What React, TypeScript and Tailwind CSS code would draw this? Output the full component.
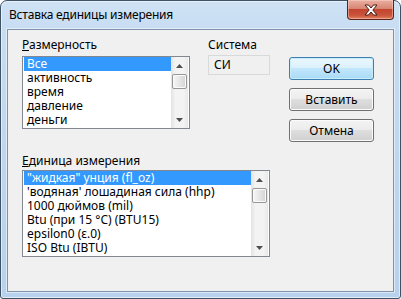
import React from "react";

const dims = ["Все", "активность", "время", "давление", "деньги"];
const units = [
  "\"жидкая\" унция (fl_oz)",
  "'водяная' лошадиная сила (hhp)",
  "1000 дюймов (mil)",
  "Btu (при 15 °C) (BTU15)",
  "epsilon0 (ε.0)",
  "ISO Btu (IBTU)",
];

function Arrow({ down }: { down?: boolean }) {
  return (
    <svg width="7" height="4" viewBox="0 0 7 4">
      <path d={down ? "M0 0H7L3.5 4z" : "M3.5 0L7 4H0z"} fill="#505050" />
    </svg>
  );
}

function ScrollBar() {
  return (
    <div className="flex w-[17px] shrink-0 flex-col bg-[linear-gradient(90deg,#e3e3e3,#f3f3f3_25%,#f3f3f3_75%,#e8e8e8)]">
      <div className="flex h-[17px] items-center justify-center">
        <Arrow />
      </div>
      <div className="mx-px h-[15px] rounded-[2px] border border-[#979797] bg-[linear-gradient(90deg,#f7f7f7,#e6e6e6_50%,#d3d3d3)] shadow-[inset_0_0_0_1px_#fbfbfb]" />
      <div className="flex-1" />
      <div className="flex h-[17px] items-center justify-center">
        <Arrow down />
      </div>
    </div>
  );
}

function ListBox({ items, className }: { items: string[]; className: string }) {
  return (
    <div className={`flex border border-[#828790] bg-white px-px ${className}`}>
      <div className="min-w-0 flex-1">
        {items.map((item, i) => (
          <div
            key={item}
            className={`h-[14px] whitespace-nowrap pl-[3px] leading-[14px] ${
              i === 0 ? "bg-[#3399ff] text-white" : "text-black"
            }`}
          >
            {item}
          </div>
        ))}
      </div>
      <ScrollBar />
    </div>
  );
}

function Button({ label, primary }: { label: string; primary?: boolean }) {
  return (
    <div
      className={`flex h-[23px] w-[85px] items-center justify-center rounded-[3px] border ${
        primary
          ? "border-[#3c7fb1] bg-[linear-gradient(180deg,#ecf7fd_0%,#dcf1fc_45%,#c1e7fc_50%,#a9daf5_100%)] shadow-[inset_0_0_0_1px_#c8ecfc]"
          : "border-[#707070] bg-[linear-gradient(180deg,#f3f3f3_0%,#ececec_45%,#dedede_50%,#d0d0d0_100%)] shadow-[inset_0_0_0_1px_#fbfbfb]"
      }`}
    >
      {label}
    </div>
  );
}

export default function App() {
  return (
    <div className="h-[299px] w-[401px] font-['Noto_Sans',sans-serif] text-[12px] text-black">
      <div className="flex h-full w-full flex-col rounded-t-[7px] rounded-b-[3px] border border-[#3f5266] bg-[linear-gradient(180deg,#cfe2f5_0%,#c6dcf2_12%,#bdd5ee_60%,#b8d2ed_100%)] shadow-[inset_0_0_0_1px_rgba(255,255,255,0.55)]">
        {/* заголовок окна */}
        <div className="flex h-[28px] shrink-0 items-start justify-between">
          <div className="pl-[8px] pt-[6px] leading-[15px] tracking-[-0.2px]">Вставка единицы измерения</div>
          <div className="-mt-px mr-[6px] flex h-[20px] w-[47px] items-center justify-center rounded-b-[4px] border border-t-0 border-[#5c2219] bg-[linear-gradient(180deg,#eab0a2_0%,#d88572_45%,#c2452f_50%,#c9543a_80%,#e07f5d_100%)] shadow-[inset_0_0_0_1px_rgba(255,220,210,0.45)]">
            <svg width="14" height="12" viewBox="0 0 14 12">
              <path
                d="M1 1H4.5L7 4L9.5 1H13L8.8 6L13 11H9.5L7 8L4.5 11H1L5.2 6z"
                fill="#ffffff"
                stroke="#4a1a12"
                strokeWidth="1"
                strokeLinejoin="round"
              />
            </svg>
          </div>
        </div>

        {/* клиентская область */}
        <div className="mx-[6px] mb-[6px] flex flex-1 border border-[#7e93aa] bg-[#f0f0f0] shadow-[0_0_0_1px_rgba(255,255,255,0.5)]">
          <div className="flex flex-col pl-[14px] pt-[7px]">
            <div className="flex gap-[18px]">
              <div className="flex w-[168px] flex-col">
                <div className="h-[15px] leading-[15px]">
                  <span className="underline">Р</span>азмерность
                </div>
                <ListBox items={dims} className="mt-[4px] h-[73px] w-[168px]" />
              </div>
              <div className="flex w-[62px] flex-col">
                <div className="h-[15px] leading-[15px]">Система</div>
                <div className="mt-[3px] flex h-[20px] items-center border border-[#d9d9d9] bg-[#f0f0f0] pl-[5px]">
                  СИ
                </div>
              </div>
            </div>
            <div className="mt-[24px] h-[15px] leading-[15px]">
              <span className="underline">Е</span>диница измерения
            </div>
            <ListBox items={units} className="mt-[2px] h-[87px] w-[248px]" />
          </div>

          <div className="ml-[19px] flex flex-col gap-[8px] pt-[27px]">
            <Button label="OK" primary />
            <Button label="Вставить" />
            <Button label="Отмена" />
          </div>
        </div>
      </div>
    </div>
  );
}
